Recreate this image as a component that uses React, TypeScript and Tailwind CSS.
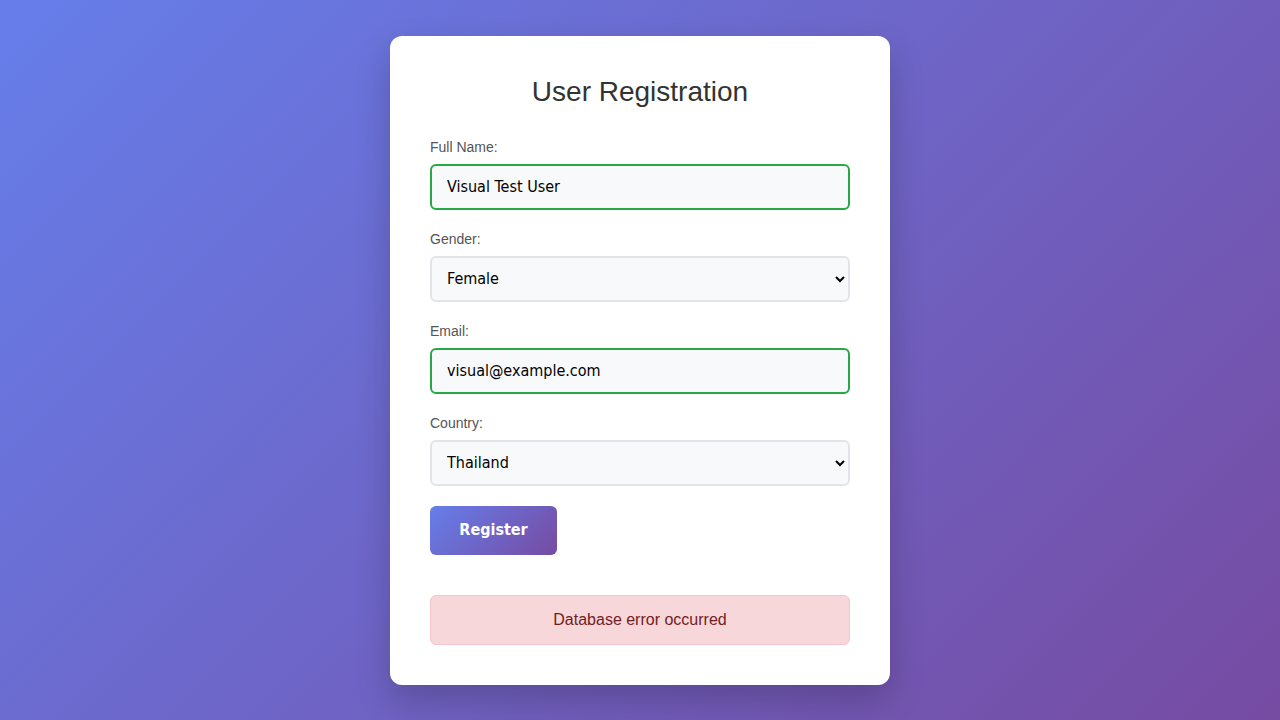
import { useState } from "react";

const inputFont = "[font-family:'DejaVu_Sans_Condensed','DejaVu_Sans',sans-serif] font-stretch-condensed";

const Field = ({ label, children }: { label: string; children: React.ReactNode }) => (
    <div className="mb-5">
        <label className="mb-2 block text-[14px] leading-[18px] text-[#555]">{label}</label>
        {children}
    </div>
);

const App = () => {
    const [fullName, setFullName] = useState<string>("Visual Test User");
    const [gender, setGender] = useState<string>("female");
    const [email, setEmail] = useState<string>("visual@example.com");
    const [country, setCountry] = useState<string>("thailand");

    const boxBase = `block h-[46px] w-full rounded-[6px] border-2 bg-[#f8f9fa] text-[16px] text-black outline-none ${inputFont}`;

    return (
        <div className="flex min-h-screen items-center justify-center bg-[linear-gradient(135deg,#667eea_0%,#764ba2_100%)] [font-family:'Liberation_Sans',Arial,sans-serif]">
            <div className="w-[500px] rounded-[12px] bg-white p-10 shadow-[0_15px_35px_rgba(0,0,0,0.2)]">
                <h2 className="mb-[30px] text-center text-[28px] leading-8 text-[#333]">User Registration</h2>
                <form onSubmit={e => e.preventDefault()}>
                    <Field label="Full Name:">
                        <input
                            className={`${boxBase} border-[#28a745] px-[15px]`}
                            value={fullName}
                            onChange={e => setFullName(e.target.value)}
                        />
                    </Field>
                    <Field label="Gender:">
                        <select
                            className={`${boxBase} border-[#e1e5e9] pl-[11px] pr-2`}
                            value={gender}
                            onChange={e => setGender(e.target.value)}
                        >
                            <option value="male">Male</option>
                            <option value="female">Female</option>
                            <option value="other">Other</option>
                        </select>
                    </Field>
                    <Field label="Email:">
                        <input
                            className={`${boxBase} border-[#28a745] px-[15px]`}
                            value={email}
                            onChange={e => setEmail(e.target.value)}
                        />
                    </Field>
                    <Field label="Country:">
                        <select
                            className={`${boxBase} border-[#e1e5e9] pl-[11px] pr-2`}
                            value={country}
                            onChange={e => setCountry(e.target.value)}
                        >
                            <option value="usa">USA</option>
                            <option value="thailand">Thailand</option>
                            <option value="japan">Japan</option>
                        </select>
                    </Field>
                    <button
                        type="submit"
                        className={`h-[49px] w-[127px] rounded-[6px] bg-[linear-gradient(135deg,#667eea_0%,#764ba2_100%)] text-[16px] font-bold text-white ${inputFont}`}
                    >
                        Register
                    </button>
                </form>
                <div className="mt-10 rounded-[6px] border border-[#f5c6cb] bg-[#f8d7da] py-[15px] text-center text-[16px] leading-[18px] text-[#721c24]">
                    Database error occurred
                </div>
            </div>
        </div>
    );
};

export default App;
